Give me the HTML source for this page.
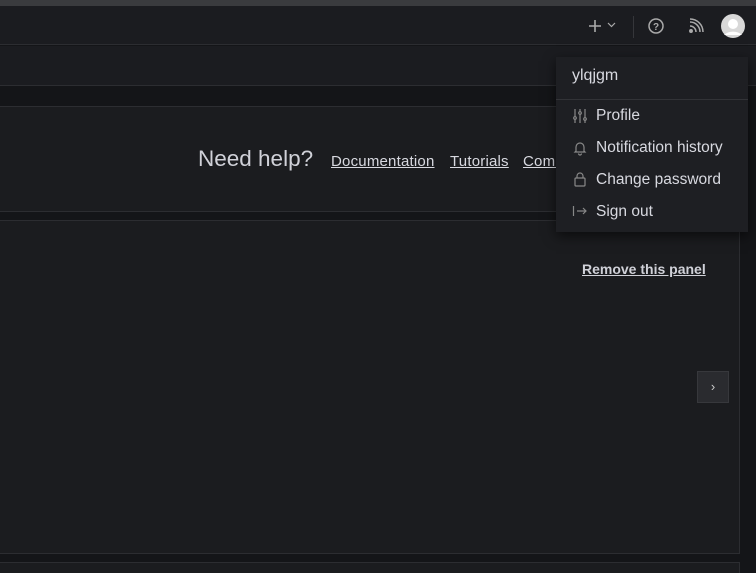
<!DOCTYPE html>
<html><head><style>
*{margin:0;padding:0;box-sizing:border-box}
html,body{width:756px;height:573px;overflow:hidden}
body{background:#141518;font-family:"Liberation Sans",sans-serif;position:relative;color:#ccccdc}
.a{position:absolute}
</style></head><body>
<div class="a" style="left:0;top:0;width:756px;height:6px;background:#3a3b3e"></div>
<div class="a" style="left:0;top:6px;width:756px;height:39px;background:#1b1c20;border-bottom:1px solid #2c2d31"></div>
<div class="a" style="left:0;top:46px;width:756px;height:40px;background:#1b1c20;border-bottom:1px solid #2c2d31"></div>
<div class="a" style="left:-2px;top:106px;width:742px;height:106px;background:#1b1c1f;border:1px solid #2c2d31"></div>
<div class="a" style="left:-2px;top:220px;width:742px;height:334px;background:#1b1c1f;border:1px solid #2c2d31"></div>
<div class="a" style="left:-2px;top:562px;width:742px;height:11px;background:#1b1c1f;border:1px solid #2c2d31;border-bottom:none"></div>
<div class="a" style="left:198px;top:146px;font-size:22.5px;color:#d0d1d8">Need help?</div>
<div class="a" style="left:331px;top:153px;font-size:15px;letter-spacing:0.2px;text-decoration:underline;color:#d8d9e0">Documentation</div>
<div class="a" style="left:450px;top:153px;font-size:15px;letter-spacing:0.2px;text-decoration:underline;color:#d8d9e0">Tutorials</div>
<div class="a" style="left:523px;top:153px;font-size:15px;letter-spacing:0.2px;text-decoration:underline;color:#d8d9e0;width:33px;overflow:hidden;white-space:nowrap">Community</div>
<div class="a" style="left:582px;top:261px;font-size:14px;font-weight:bold;text-decoration:underline;color:#d0d1d8">Remove this panel</div>
<div class="a" style="left:697px;top:371px;width:32px;height:32px;background:#2a2b2f;border:1px solid #37383c;color:#ccc;font-size:13px;text-align:center;line-height:29px">›</div>
<svg class="a" style="left:588px;top:19px" width="14" height="14" viewBox="0 0 14 14" stroke="#aaa" stroke-width="1.6"><path d="M7 1v12M1 7h12"/></svg>
<svg class="a" style="left:607px;top:22px" width="9" height="6" viewBox="0 0 9 6" stroke="#aaa" stroke-width="1.2" fill="none"><path d="M1 1l3.5 3.5L8 1"/></svg>
<div class="a" style="left:633px;top:16px;width:1px;height:22px;background:#35363a"></div>
<svg class="a" style="left:647px;top:17px" width="18" height="18" viewBox="0 0 18 18"><circle cx="9" cy="9" r="7" fill="none" stroke="#aaa" stroke-width="1.5"/><text x="9" y="13" font-size="10" fill="#aaa" text-anchor="middle" font-family="Liberation Sans" font-weight="bold">?</text></svg>
<svg class="a" style="left:688px;top:18px" width="16" height="16" viewBox="0 0 16 16" fill="none" stroke="#aaa" stroke-width="1.5"><circle cx="3" cy="13" r="1.2" fill="#aaa"/><path d="M2 8a6 6 0 0 1 6 6M2 4a10 10 0 0 1 10 10M2 1a13 13 0 0 1 13 13"/></svg>
<svg class="a" style="left:721px;top:14px" width="24" height="24" viewBox="0 0 24 24"><circle cx="12" cy="12" r="12" fill="#d8d8d8"/><circle cx="12" cy="10" r="5" fill="#fff"/><path d="M3 21a11 8 0 0 1 18 0" fill="#fff"/></svg>
<div class="a" style="left:556px;top:57px;width:192px;height:175px;background:#1e1f23;box-shadow:0 4px 12px rgba(0,0,0,.6)">
<div class="a" style="left:16px;top:10px;font-size:16px;color:#d8d9e0">ylqjgm</div>
<div class="a" style="left:0;top:42px;width:192px;height:1px;background:#323337"></div>
<div class="a" style="left:40px;top:50px;font-size:15.5px;color:#d8d9e0">Profile</div>
<div class="a" style="left:40px;top:82px;font-size:15.5px;color:#d8d9e0">Notification history</div>
<div class="a" style="left:40px;top:114px;font-size:15.5px;color:#d8d9e0">Change password</div>
<div class="a" style="left:40px;top:146px;font-size:15.5px;color:#d8d9e0">Sign out</div>
<svg class="a" style="left:16px;top:51px" width="16" height="16" viewBox="0 0 16 16" stroke="#888" stroke-width="1.2" fill="none"><path d="M3 1v14M8 1v14M13 1v14"/><circle cx="3" cy="10" r="1.3" fill="#1e1f23"/><circle cx="8" cy="5" r="1.3" fill="#1e1f23"/><circle cx="13" cy="11" r="1.3" fill="#1e1f23"/></svg>
<svg class="a" style="left:16px;top:83px" width="16" height="16" viewBox="0 0 16 16" stroke="#888" stroke-width="1.2" fill="none"><path d="M4 11V7a4 4 0 0 1 8 0v4l1 1H3zM6.5 13.5a1.5 1.5 0 0 0 3 0"/></svg>
<svg class="a" style="left:16px;top:114px" width="16" height="16" viewBox="0 0 16 16" stroke="#888" stroke-width="1.2" fill="none"><rect x="3" y="7" width="10" height="8" rx="1"/><path d="M5 7V5a3 3 0 0 1 6 0v2"/></svg>
<svg class="a" style="left:16px;top:146px" width="16" height="16" viewBox="0 0 16 16" stroke="#888" stroke-width="1.2" fill="none"><path d="M1.5 3v10M5 8h9M11 5l3 3-3 3"/></svg>
</div>
</body></html>
